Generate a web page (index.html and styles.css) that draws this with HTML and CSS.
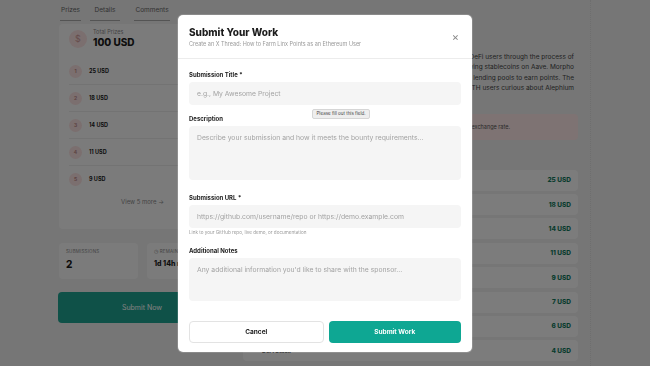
FILE: index.html
```html
<!DOCTYPE html>
<html>
<head>
    <title>Bounty - Submit Your Work</title>
    <link rel="stylesheet" href="styles.css">
</head>
<body>
    <div class="page">
        <div class="left">
            <div class="tabs">
                <span class="tab tab-prizes">Prizes</span>
                <span class="tab tab-details">Details</span>
                <span class="tab tab-comments">Comments</span>
            </div>
            <div class="prize-card">
                <div class="total">
                    <div class="dollar">$</div>
                    <div>
                        <div class="total-label">Total Prizes</div>
                        <div class="total-value">100 USD</div>
                    </div>
                </div>
                <div class="rank-row"><span class="rank">1</span>25 USD</div>
                <div class="rank-row"><span class="rank">2</span>18 USD</div>
                <div class="rank-row"><span class="rank">3</span>14 USD</div>
                <div class="rank-row"><span class="rank">4</span>11 USD</div>
                <div class="rank-row last"><span class="rank">5</span>9 USD</div>
                <div class="view-more">View 5 more &rarr;</div>
            </div>
            <div class="stats">
                <div class="stat">
                    <div class="stat-label">Submissions</div>
                    <div class="stat-value">2</div>
                </div>
                <div class="stat">
                    <div class="stat-label">&#9719; Remaining</div>
                    <div class="stat-value small">1d 14h remaining</div>
                </div>
            </div>
            <button class="submit-now">Submit Now</button>
        </div>

        <div class="main">
            <div class="about">
                <div class="line">This bounty asks writers to walk Ethereum and DeFi users through the process of</div>
                <div class="line">supplying ETH as collateral and then borrowing stablecoins on Aave. Morpho</div>
                <div class="line">and finally moving those funds into Linx lending pools to earn points. The</div>
                <div class="line">thread should be easy to follow for ETH users curious about Alephium</div>
            </div>
            <div class="note">Prize amounts are paid out in USD at the current exchange rate.</div>
            <div class="prize-list">
                <div class="prize-row"><span class="place">1st Place</span><span class="amount">25 USD</span></div>
                <div class="prize-row"><span class="place">2nd Place</span><span class="amount">18 USD</span></div>
                <div class="prize-row"><span class="place">3rd Place</span><span class="amount">14 USD</span></div>
                <div class="prize-row"><span class="place">4th Place</span><span class="amount">11 USD</span></div>
                <div class="prize-row"><span class="place">5th Place</span><span class="amount">9 USD</span></div>
                <div class="prize-row"><span class="place">6th Place</span><span class="amount">7 USD</span></div>
                <div class="prize-row"><span class="place">7th Place</span><span class="amount">6 USD</span></div>
                <div class="prize-row"><span class="place">DeFi Stack</span><span class="amount">4 USD</span></div>
            </div>
        </div>

        <div class="side"></div>
    </div>

    <div class="overlay">
        <div class="modal">
            <div class="modal-header">
                <div>
                    <div class="modal-title">Submit Your Work</div>
                    <div class="modal-subtitle">Create an X Thread: How to Farm Linx Points as an Ethereum User</div>
                </div>
                <span class="close">&times;</span>
            </div>
            <form class="modal-body">
                <label class="label">Submission Title *</label>
                <div class="field-wrap">
                    <input class="field" type="text" placeholder="e.g., My Awesome Project" required>
                    <span class="tooltip">Please fill out this field.</span>
                </div>

                <label class="label label-desc">Description</label>
                <textarea class="field area-desc" placeholder="Describe your submission and how it meets the bounty requirements..."></textarea>

                <label class="label label-url">Submission URL *</label>
                <input class="field" type="text" placeholder="https://github.com/username/repo or https://demo.example.com">
                <div class="hint">Link to your GitHub repo, live demo, or documentation</div>

                <label class="label label-notes">Additional Notes</label>
                <textarea class="field area-notes" placeholder="Any additional information you'd like to share with the sponsor..."></textarea>

                <div class="actions">
                    <button type="button" class="btn cancel">Cancel</button>
                    <button type="button" class="btn submit">Submit Work</button>
                </div>
            </form>
        </div>
    </div>
</body>
</html>
```

FILE: styles.css
```css
body {
    margin: 0;
    background-color: #ececec;
    font-family: Inter, "Noto Sans", sans-serif;
    color: #1c1c1c;
    overflow: hidden;
}

.page {
    display: flex;
    height: 366px;
    padding-left: 59px;
}

/* left column */
.left {
    width: 167px;
    flex-shrink: 0;
    margin-right: 17px;
}

.tabs {
    display: flex;
    height: 23px;
    font-size: 6.5px;
    color: #666;
}

.tab {
    display: flex;
    align-items: center;
    justify-content: center;
    height: 20px;
    border-bottom: 1.5px solid #a8a8a8;
}

.tab-prizes { width: 21px; margin-left: 1px; }
.tab-details { width: 30px; margin-left: 9px; }
.tab-comments { width: 36px; margin-left: 14px; }

.prize-card {
    margin-top: 1px;
    height: 205px;
    background-color: #f7f7f7;
    border-radius: 4px;
    padding: 5px 10px 0 10px;
    box-sizing: border-box;
}

.total {
    display: flex;
    align-items: center;
    gap: 6px;
    height: 19px;
    margin-bottom: 10px;
}

.dollar {
    width: 18px;
    height: 18px;
    border-radius: 50%;
    background-color: #f6dede;
    color: #c99;
    font-size: 9px;
    display: flex;
    align-items: center;
    justify-content: center;
}

.total-label {
    font-size: 5.5px;
    color: #888;
}

.total-value {
    font-size: 10px;
    font-weight: 800;
    margin-top: 1px;
}

.rank-row {
    display: flex;
    align-items: center;
    gap: 7px;
    height: 26px;
    border-bottom: 1px solid #e6e6e6;
    font-size: 5.5px;
    font-weight: 700;
}

.rank-row.last { border-bottom: none; }

.rank {
    width: 13px;
    height: 13px;
    border-radius: 50%;
    background-color: #f6dede;
    color: #b88;
    font-size: 5px;
    display: flex;
    align-items: center;
    justify-content: center;
}

.view-more {
    text-align: center;
    font-size: 6px;
    color: #888;
    margin-top: 6px;
}

.stats {
    display: flex;
    gap: 9px;
    margin-top: 14px;
}

.stat {
    flex: 1;
    height: 36px;
    background-color: #f7f7f7;
    border-radius: 4px;
    padding: 6px 7px;
    box-sizing: border-box;
    overflow: hidden;
    white-space: nowrap;
}

.stat-label {
    font-size: 4.5px;
    color: #888;
    text-transform: uppercase;
    letter-spacing: 0.2px;
}

.stat-value {
    font-size: 10px;
    line-height: 12px;
    font-weight: 800;
    margin-top: 4px;
}

.stat-value.small {
    font-size: 7px;
}

.submit-now {
    display: block;
    width: 168px;
    height: 31px;
    margin-top: 13px;
    margin-left: -1px;
    border: none;
    border-radius: 4px;
    background-color: #1ea391;
    color: #fff;
    font-family: inherit;
    font-size: 7px;
}

/* middle column */
.main {
    width: 335px;
    flex-shrink: 0;
}

.about {
    margin-top: 52px;
    font-size: 6.5px;
    line-height: 10.4px;
    color: #444;
    white-space: nowrap;
    text-align: right;
    padding-right: 4px;
    overflow: hidden;
}

.note {
    margin-top: 20px;
    height: 26px;
    display: flex;
    align-items: center;
    justify-content: flex-end;
    padding-right: 68px;
    background-color: #fde6e6;
    border-radius: 4px;
    font-size: 5.5px;
    color: #555;
    white-space: nowrap;
    overflow: hidden;
}

.prize-list {
    margin-top: 30px;
    display: flex;
    flex-direction: column;
    gap: 3.4px;
}

.prize-row {
    height: 21px;
    display: flex;
    align-items: center;
    justify-content: space-between;
    padding: 0 7px 0 19px;
    background-color: #f9f9f9;
    border-radius: 4px;
    font-size: 6.5px;
    font-weight: 800;
}

.place { color: #333; font-size: 5.5px; }
.amount { color: #13785d; }

.side {
    flex: 1;
    margin-left: 12px;
    border-left: 1px dotted #dcdcdc;
}

/* modal */
.overlay {
    position: fixed;
    inset: 0;
    background-color: rgba(0, 0, 0, 0.5);
    display: flex;
    align-items: center;
    justify-content: center;
}

.modal {
    width: 294px;
    height: 337px;
    background-color: #fff;
    border-radius: 5px;
    box-shadow: 0 0 0 1px rgba(255, 255, 255, 0.15);
}

.modal-header {
    display: flex;
    justify-content: space-between;
    align-items: center;
    padding: 11px 11px 10px 11px;
    border-bottom: 1px solid #ececec;
}

.modal-title {
    font-size: 10px;
    line-height: 12px;
    font-weight: 800;
}

.modal-subtitle {
    font-size: 5.5px;
    line-height: 8px;
    color: #999;
    margin-top: 2px;
}

.close {
    font-size: 11px;
    color: #888;
    margin-right: 2px;
}

.modal-body {
    display: flex;
    flex-direction: column;
    padding: 12px 11px 0 11px;
}

.label {
    font-size: 6px;
    line-height: 7px;
    font-weight: 700;
    color: #222;
    margin-bottom: 4px;
}

.label-desc { margin-top: 10px; }
.label-url { margin-top: 14px; }
.label-notes { margin-top: 11.5px; }

.field-wrap {
    position: relative;
}

.field {
    display: block;
    width: 100%;
    height: 23px;
    box-sizing: border-box;
    border: none;
    border-radius: 4px;
    background-color: #f5f5f5;
    padding: 0 8px;
    font-family: inherit;
    font-size: 6.8px;
    line-height: 9px;
    resize: none;
    outline: none;
}

.field::placeholder {
    color: #a3a3a3;
}

textarea.field {
    padding-top: 7px;
}

.area-desc { height: 54px; }
.area-notes { height: 43px; }

.tooltip {
    position: absolute;
    left: 123px;
    top: 27px;
    padding: 1.5px 3.5px;
    font-size: 4.5px;
    color: #444;
    background-color: #eee;
    border: 1px solid #d6d6d6;
    border-radius: 2px;
    white-space: nowrap;
}

.hint {
    font-size: 4.6px;
    line-height: 6px;
    color: #999;
    margin-top: 2px;
}

.actions {
    display: flex;
    gap: 5px;
    margin-top: 20px;
}

.btn {
    flex: 1;
    height: 22px;
    border-radius: 4px;
    font-family: inherit;
    font-size: 6.5px;
    font-weight: 700;
}

.cancel {
    background-color: #fff;
    border: 1px solid #e3e3e3;
    color: #222;
}

.submit {
    background-color: #0ea793;
    border: none;
    color: #fff;
}
```
